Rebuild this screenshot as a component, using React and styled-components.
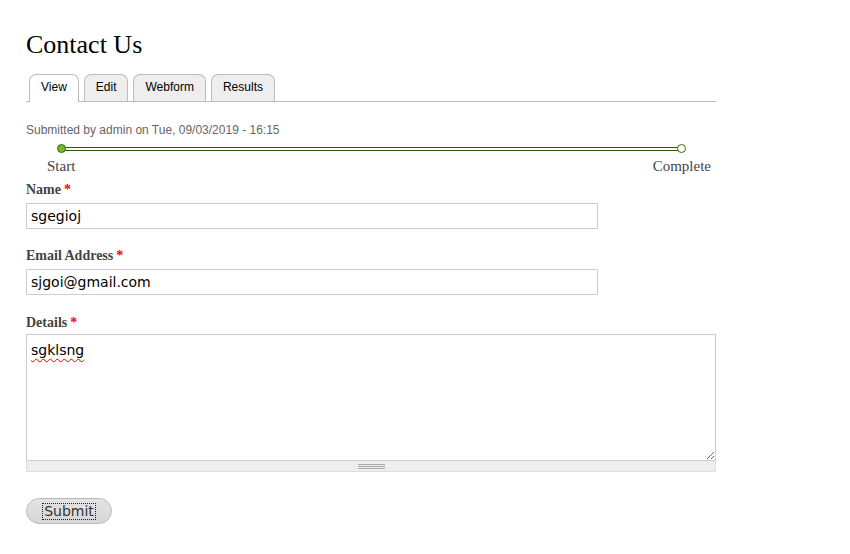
import React from 'react'
import styled, { createGlobalStyle } from 'styled-components'

const GlobalStyle = createGlobalStyle`
  body {
    margin: 0;
    background: #fff;
    font-family: "Liberation Sans", Arial, sans-serif;
  }
`
const Page = styled.div`
  width: 690px;
  padding: 29px 0 0 26px;
`
const Title = styled.h1`
  margin: 0;
  font-family: "Liberation Serif", "Times New Roman", serif;
  font-weight: 400;
  font-size: 26px;
  line-height: 32px;
  color: #000;
`
const Tabs = styled.ul`
  display: flex;
  gap: 5px;
  list-style: none;
  margin: 13px 0 0;
  padding: 0 0 0 3px;
  border-bottom: 1px solid #bbb;
`
const Tab = styled.li`
  box-sizing: border-box;
  padding: 4px 11px 0;
  border: 1px solid #bbb;
  border-bottom: none;
  border-radius: 7px 7px 0 0;
  background: ${p => (p.$active ? '#fff' : '#eee')};
  margin-bottom: ${p => (p.$active ? '-1px' : '0')};
  height: ${p => (p.$active ? '28px' : '27px')};
  font-size: 12px;
  line-height: 16px;
  color: #000;
`
const Submitted = styled.div`
  margin-top: 19px;
  font-size: 12px;
  line-height: 18px;
  color: #666;
`
const Track = styled.div`
  display: flex;
  align-items: center;
  margin: 5px 30px 0 31px;
`
const Dot = styled.span`
  width: 9px;
  height: 9px;
  box-sizing: border-box;
  border-radius: 50%;
  border: 1px solid #3a680a;
  background: ${p => (p.$done ? '#72bb2a' : '#fff')};
  position: relative;
  z-index: 1;
`
const Line = styled.span`
  flex: 1;
  height: 4px;
  box-sizing: border-box;
  border-top: 1px solid #2f5a05;
  border-bottom: 1px solid #2f5a05;
  background: #fff;
  margin: 0 -1px;
`
const StepLabels = styled.div`
  display: flex;
  justify-content: space-between;
  margin: 5px 5px 0 21px;
  font-family: "Liberation Serif", "Times New Roman", serif;
  font-size: 15px;
  line-height: 17px;
  color: #444;
`
const Field = styled.div`
  margin-top: ${p => p.$top};
`
const Label = styled.label`
  display: block;
  font-family: "Liberation Serif", "Times New Roman", serif;
  font-weight: 700;
  font-size: 14px;
  line-height: 16px;
  color: #444;
  margin-bottom: ${p => p.$gap || '5px'};
`
const Req = styled.span`
  color: #f00;
  margin-left: 3px;
`
const Input = styled.input`
  display: block;
  box-sizing: border-box;
  width: 572px;
  height: 26px;
  margin: 0;
  padding: 0 4px;
  border: 1px solid #ccc;
  font-family: "DejaVu Sans", sans-serif;
  font-size: 14px;
  color: #000;
  background: #fff;
  outline: none;
`
const TextArea = styled.textarea`
  display: block;
  box-sizing: border-box;
  width: 690px;
  height: 127px;
  margin: 0;
  padding: 7px 4px 5px;
  border: 1px solid #ccc;
  font-family: "DejaVu Sans", sans-serif;
  font-size: 14px;
  line-height: 17px;
  color: #000;
  resize: vertical;
  outline: none;
  text-decoration: underline wavy #e00;
  text-decoration-thickness: 1px;
  text-underline-offset: 3px;
`
const Grippie = styled.div`
  box-sizing: border-box;
  height: 11px;
  width: 690px;
  background: #eee;
  border: 1px solid #ddd;
  border-top: none;
  display: flex;
  justify-content: center;
  align-items: center;
`
const Grip = styled.span`
  width: 27px;
  height: 5px;
  background: repeating-linear-gradient(to bottom, #aaa 0 1px, transparent 1px 2px);
`
const Button = styled.button`
  margin-top: 26px;
  width: 86px;
  height: 26px;
  border: 1px solid #bbb;
  border-radius: 13px;
  background: linear-gradient(#e4e4e4, #d6d6d6);
  font-family: "DejaVu Sans", sans-serif;
  font-size: 14px;
  color: #333;
  padding: 0;
  display: flex;
  align-items: center;
  justify-content: center;
`
const Focus = styled.span`
  border: 1px dotted #222;
  padding: 0 1px;
  line-height: 15px;
`

const App = () => {
  return (
    <Page>
      <GlobalStyle />
      <Title>Contact Us</Title>
      <Tabs>
        <Tab $active>View</Tab>
        <Tab>Edit</Tab>
        <Tab>Webform</Tab>
        <Tab>Results</Tab>
      </Tabs>
      <Submitted>Submitted by admin on Tue, 09/03/2019 - 16:15</Submitted>
      <Track>
        <Dot $done />
        <Line />
        <Dot />
      </Track>
      <StepLabels>
        <span>Start</span>
        <span>Complete</span>
      </StepLabels>
      <Field $top="7px">
        <Label>Name<Req>*</Req></Label>
        <Input defaultValue="sgegioj" />
      </Field>
      <Field $top="19px">
        <Label>Email Address<Req>*</Req></Label>
        <Input defaultValue="sjgoi@gmail.com" />
      </Field>
      <Field $top="20px">
        <Label $gap="3px">Details<Req>*</Req></Label>
        <TextArea defaultValue="sgklsng" />
        <Grippie><Grip /></Grippie>
      </Field>
      <Button><Focus>Submit</Focus></Button>
    </Page>
  )
}

export default App
